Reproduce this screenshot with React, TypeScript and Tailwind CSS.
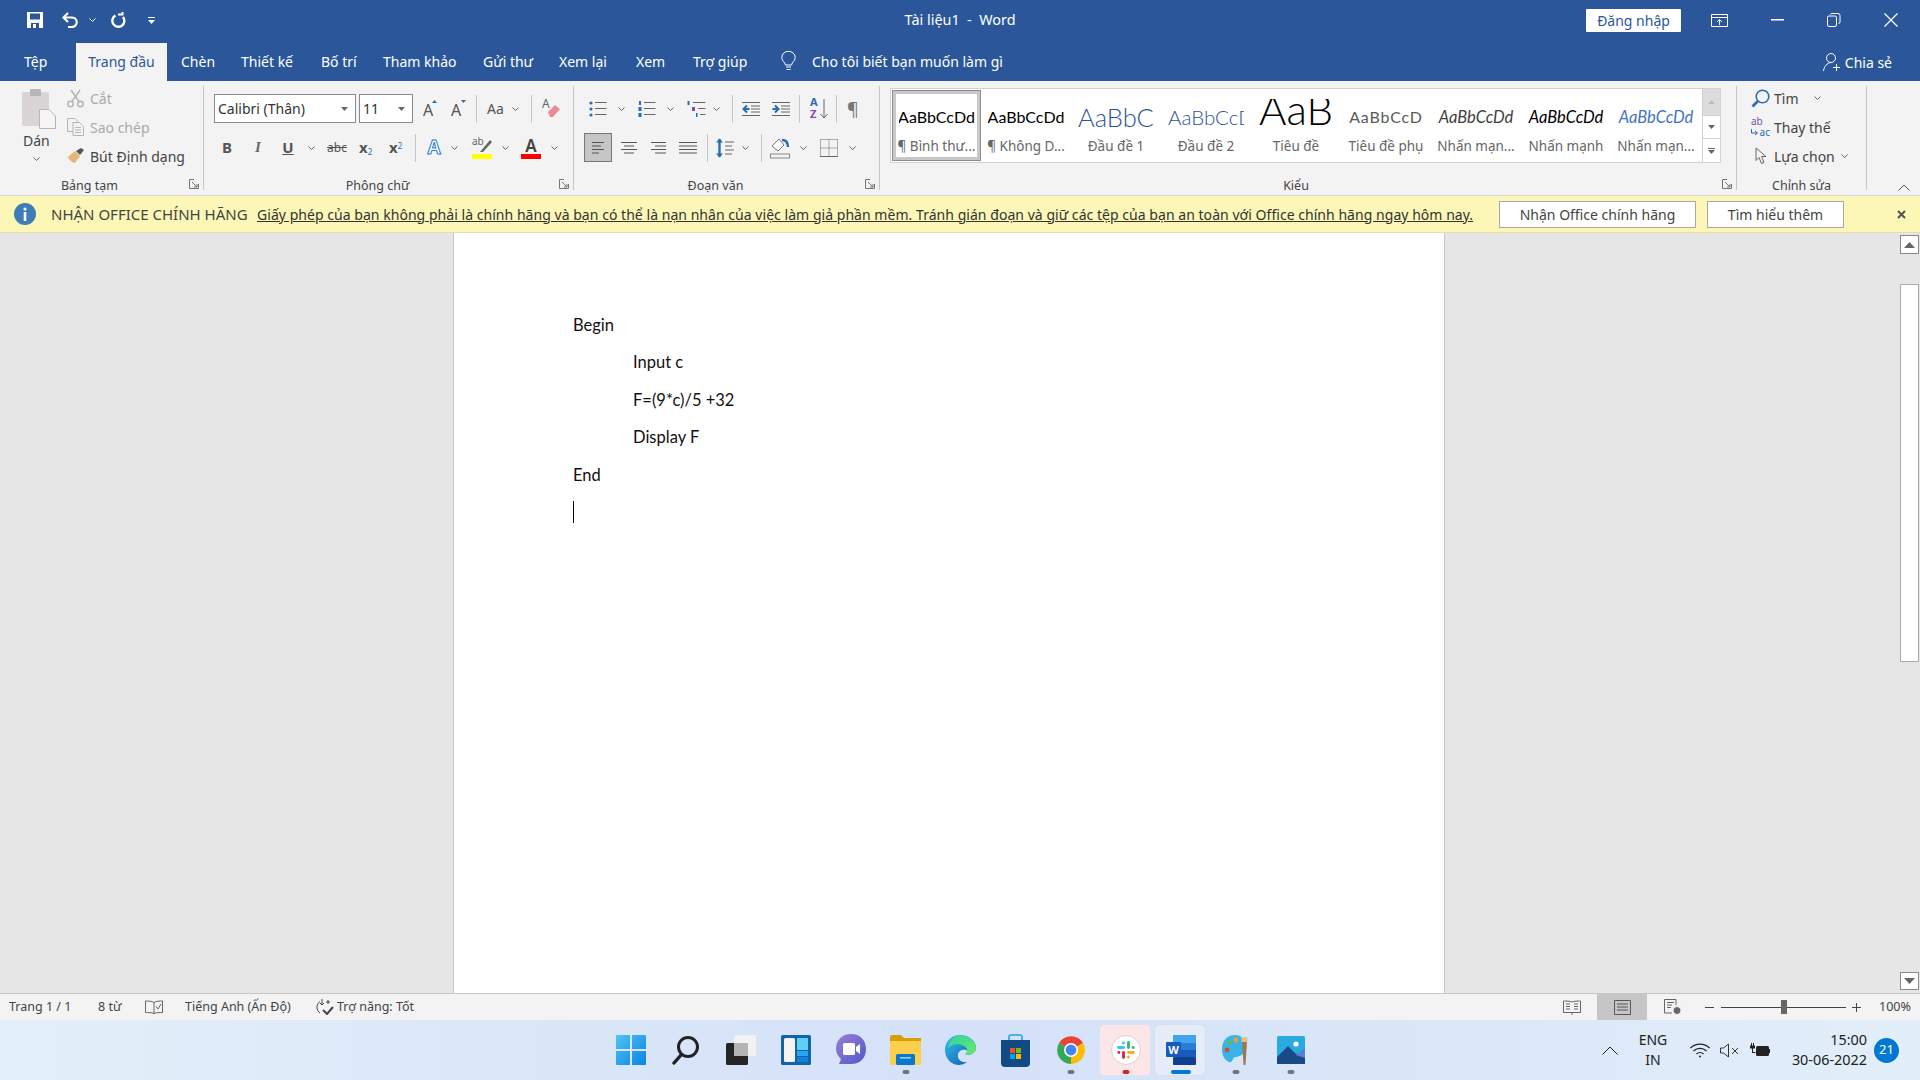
import React from 'react';

const Chev = ({ className = 'ml-0', color = '#666' }: { className?: string; color?: string }) => (
  <svg className={`shrink-0 ${className}`} width="7" height="4" viewBox="0 0 7 4" fill="none">
    <path d="M0.5 0.5 3.5 3.5 6.5 0.5" stroke={color} />
  </svg>
);

const Sep = ({ className }: { className: string }) => <div className={`w-px h-[28px] bg-[#c6c6c6] shrink-0 ${className}`} />;

const Launcher = () => (
  <svg className="absolute right-[4px] top-[3px]" width="10" height="10" viewBox="0 0 10 10" fill="none" stroke="#777">
    <path d="M9.5 5V9.5H0.5V0.5H5" />
    <path d="M3 3 8 8M8 5V8H5" />
  </svg>
);

const Group = ({ label, className, labelClass = '', launcher = true, children }: { label: string; className: string; labelClass?: string; launcher?: boolean; children: React.ReactNode }) => (
  <div className={`my-[5px] flex flex-col border-r border-[#c6c6c6] shrink-0 ${className}`}>
    <div className="flex-1 min-h-0">{children}</div>
    <div className={`relative h-[20px] -mb-[6px] flex items-center justify-center text-[12.5px] text-[#444] ${labelClass}`}>
      <span>{label}</span>
      {launcher && <Launcher />}
    </div>
  </div>
);

const Lines = ({ rows, className = '' }: { rows: [number, number][]; className?: string }) => (
  <svg className={`shrink-0 ${className}`} width="18" height="16" viewBox="0 0 18 16" stroke="#555">
    {rows.map(([x1, x2], i) => (
      <path key={i} d={`M${x1} ${2.5 + i * 3.5}H${x2}`} />
    ))}
  </svg>
);

const ListIcon = ({ kind, className }: { kind: 'b' | 'n' | 'm'; className: string }) => (
  <svg className={`shrink-0 ${className}`} width="20" height="18" viewBox="0 0 20 18" fill="#2b6cb0" stroke="none">
    {kind === 'b' && (
      <>
        <circle cx="2" cy="3" r="1.6" />
        <circle cx="2" cy="9" r="1.6" />
        <circle cx="2" cy="15" r="1.6" />
        <path d="M6 2.5H17.5M6 8.5H17.5M6 14.5H17.5" stroke="#666" />
      </>
    )}
    {kind === 'n' && (
      <>
        <rect x="1" y="1" width="2" height="4" />
        <rect x="0.5" y="7" width="3" height="4" />
        <rect x="0.5" y="13" width="3" height="4" />
        <path d="M6 2.5H17.5M6 8.5H17.5M6 14.5H17.5" stroke="#666" />
      </>
    )}
    {kind === 'm' && (
      <>
        <rect x="0.5" y="1" width="2" height="4" />
        <rect x="5" y="7" width="3" height="4" fill="#7c4dab" />
        <rect x="9" y="13" width="1.5" height="4" />
        <path d="M6 2.5H18.5M11 8.5H18.5M13 14.5H18.5" stroke="#666" />
      </>
    )}
  </svg>
);

const IndentIcon = ({ out, className }: { out?: boolean; className: string }) => (
  <svg className={`shrink-0 ${className}`} width="18" height="16" viewBox="0 0 18 16" fill="none">
    <path d="M0 1.5H18M9 5H18M9 8H18M9 11H18M0 14.5H18" stroke="#666" />
    {out ? <path d="M7.5 8H2M5 4.5 1.5 8 5 11.5" stroke="#2b6cb0" strokeWidth="2" /> : <path d="M0.5 8H6M3 4.5 6.5 8 3 11.5" stroke="#2b6cb0" strokeWidth="2" />}
  </svg>
);

const styles = [
  { sample: 'AaBbCcDd', label: '¶ Bình thư...', cls: 'items-center justify-center text-[16px] text-black' },
  { sample: 'AaBbCcDd', label: '¶ Không D...', cls: 'items-center justify-center text-[16px] text-black' },
  { sample: 'AaBbCc', label: 'Đầu đề 1', cls: 'items-center justify-start text-[25.5px] font-light text-[#2f5496]' },
  { sample: 'AaBbCcD', label: 'Đầu đề 2', cls: 'items-center justify-start text-[20.5px] font-light text-[#2f5496]' },
  { sample: 'AaB', label: 'Tiêu đề', cls: 'items-start justify-center text-[42px] font-light text-black leading-[20px]' },
  { sample: 'AaBbCcD', label: 'Tiêu đề phụ', cls: 'items-center justify-center text-[16px] tracking-[0.8px] text-[#5a5a5a]' },
  { sample: 'AaBbCcDd', label: 'Nhấn mạn...', cls: 'items-center justify-center text-[16.5px] italic text-[#404040]' },
  { sample: 'AaBbCcDd', label: 'Nhấn mạnh', cls: 'items-center justify-center text-[16.5px] italic text-black' },
  { sample: 'AaBbCcDd', label: 'Nhấn mạn...', cls: 'items-center justify-center text-[16.5px] italic text-[#4472c4]' },
];

const StyleBody = ({ s }: { s: (typeof styles)[number] }) => (
  <>
    <div className={`h-[36px] w-[76px] overflow-hidden flex whitespace-nowrap font-['Lato',sans-serif] ${s.cls}`}>{s.sample}</div>
    <div className="mt-[2px] text-[13.5px] leading-[18px] text-[#666] whitespace-nowrap">{s.label}</div>
  </>
);

const TitleBar = () => (
  <div className="h-[43px] grid grid-cols-[1fr_auto_1fr] items-center bg-[#2b579a] text-white">
    <div className="flex items-center pl-[27px] pb-[3px]">
      <svg width="16" height="16" viewBox="0 0 16 16" fill="#fff">
        <path d="M0 0H16V16H0Z" />
        <rect x="3" y="1.5" width="10" height="6" fill="#2b579a" />
        <rect x="4" y="11" width="8" height="5" fill="#2b579a" />
        <rect x="6" y="12" width="3" height="4" fill="#fff" />
      </svg>
      <svg className="ml-[18px]" width="18" height="16" viewBox="0 0 18 16" fill="none" stroke="#fff" strokeWidth="2.2">
        <path d="M3 5.5H11A4.6 4.6 0 0 1 11 15H7" />
        <path d="M7 1 2.5 5.5 7 10" />
      </svg>
      <Chev className="ml-[10px]" color="#fff" />
      <svg className="ml-[14px]" width="16" height="16" viewBox="0 0 16 16" fill="none" stroke="#fff" strokeWidth="2.4">
        <path d="M5.5 3.5A6 6 0 1 0 13 5" />
        <path d="M8 2.5H12.5V0" strokeWidth="2" />
      </svg>
      <svg className="ml-[22px]" width="7" height="7" viewBox="0 0 7 7" fill="#fff">
        <rect y="0" width="7" height="1" />
        <path d="M0 3H7L3.5 7Z" />
      </svg>
    </div>
    <div className="text-[14.4px] whitespace-pre pb-[3px]">Tài liệu1  -  Word</div>
    <div className="flex items-center justify-end pr-[22px] pb-[3px]">
      <div className="w-[95px] h-[23px] bg-white rounded-[1px] flex items-center justify-center text-[14px] text-[#2b579a]">Đăng nhập</div>
      <svg className="ml-[30px]" width="17" height="13" viewBox="0 0 17 13" fill="none" stroke="#fff">
        <path d="M0.5 0.5H16.5V12.5H0.5ZM0.5 3.5H16.5" />
        <path d="M8.5 11V6M6 8 8.5 5.5 11 8" />
      </svg>
      <svg className="ml-[43px]" width="13" height="2" viewBox="0 0 13 2"><rect width="13" height="1.5" fill="#fff" /></svg>
      <svg className="ml-[43px]" width="14" height="14" viewBox="0 0 14 14" fill="none" stroke="#fff">
        <path d="M0.5 4.5Q0.5 3 2 3H8Q9.5 3 9.5 4.5V12Q9.5 13.5 8 13.5H2Q0.5 13.5 0.5 12Z" />
        <path d="M3 1.5Q3.5 0.5 5 0.5H11Q13 0.5 13 2.5V9Q13 10.5 11.5 10.5" />
      </svg>
      <svg className="ml-[43px]" width="14" height="14" viewBox="0 0 14 14" stroke="#fff" strokeWidth="1.2"><path d="M0.5 0.5 13.5 13.5M13.5 0.5 0.5 13.5" /></svg>
    </div>
  </div>
);

const Tabs = () => (
  <div className="h-[38px] flex items-stretch bg-[#2b579a] text-white text-[14px] whitespace-nowrap">
    <div className="w-[76px] pl-[24px] pb-[2px] flex items-center">Tệp</div>
    <div className="w-[91px] bg-[#f3f3f3] text-[#2b579a] pb-[2px] flex items-center justify-center">Trang đầu</div>
    <div className="w-[60px] pl-[14px] pb-[2px] flex items-center">Chèn</div>
    <div className="w-[80px] pl-[14px] pb-[2px] flex items-center">Thiết kế</div>
    <div className="w-[62px] pl-[14px] pb-[2px] flex items-center">Bố trí</div>
    <div className="w-[100px] pl-[14px] pb-[2px] flex items-center">Tham khảo</div>
    <div className="w-[76px] pl-[14px] pb-[2px] flex items-center">Gửi thư</div>
    <div className="w-[77px] pl-[14px] pb-[2px] flex items-center">Xem lại</div>
    <div className="w-[57px] pl-[14px] pb-[2px] flex items-center">Xem</div>
    <div className="w-[88px] pl-[14px] pb-[2px] flex items-center">Trợ giúp</div>
    <div className="ml-[14px] pb-[2px] flex items-center">
      <svg width="15" height="20" viewBox="0 0 15 20" fill="none" stroke="#fff">
        <path d="M4.5 14C4 11 0.8 10 0.8 6.5A6.7 6.2 0 0 1 14.2 6.5C14.2 10 11 11 10.5 14Z" />
        <path d="M5 16H10M5.5 18.5H9.5" />
      </svg>
    </div>
    <div className="ml-[16px] pb-[2px] flex items-center">Cho tôi biết bạn muốn làm gì</div>
    <div className="ml-auto pr-[28px] flex items-center">
      <svg width="18" height="20" viewBox="0 0 18 20" fill="none" stroke="#fff">
        <circle cx="8" cy="6" r="4.5" />
        <path d="M0.5 19C1 14.5 4 11 8 10.5M13.5 12V19M10 15.5H17" />
      </svg>
      <span className="ml-[4px]">Chia sẻ</span>
    </div>
  </div>
);

const Clipboard = () => (
  <Group label="Bảng tạm" className="w-[204px]" labelClass="pr-[24px]">
    <div className="flex">
      <div className="w-[67px] flex flex-col items-start pl-[22px]">
        <svg className="mt-[3px]" width="34" height="40" viewBox="0 0 34 40">
          <rect x="0" y="3" width="27" height="34" rx="1.5" fill="#d9d5d7" />
          <rect x="8" y="0" width="11" height="7" rx="1" fill="#b9b5b7" />
          <path d="M17.5 20.5H27L33.5 27V39.5H17.5Z" fill="#f6f4f6" stroke="#b9b5b7" />
        </svg>
        <div className="mt-[2px] ml-[1px] text-[14px] leading-[20px] text-[#444]">Dán</div>
        <Chev className="mt-[6px] ml-[11px]" />
      </div>
      <div className="flex flex-col gap-[3px] -mt-[1px] text-[14px]">
        <div className="h-[26px] flex items-center text-[#aaa]">
          <svg width="17" height="19" viewBox="0 0 17 19" fill="none" stroke="#b5b5b5" strokeWidth="1.5">
            <circle cx="3.5" cy="15" r="2.7" />
            <circle cx="13.5" cy="15" r="2.7" />
            <path d="M5 12.5 13 1M12 12.5 4 1" />
          </svg>
          <span className="ml-[6px]">Cắt</span>
        </div>
        <div className="h-[26px] flex items-center text-[#aaa]">
          <svg width="17" height="18" viewBox="0 0 17 18" fill="#f3f3f3" stroke="#b5b5b5">
            <path d="M0.5 0.5H8L11 3.5V13.5H0.5Z" />
            <path d="M6 4.5H12.5L16.5 8.5V17.5H6Z" />
            <path d="M8 9.5H14M8 12H14M8 14.5H14" />
          </svg>
          <span className="ml-[6px]">Sao chép</span>
        </div>
        <div className="h-[26px] flex items-center text-[#444]">
          <svg width="18" height="18" viewBox="0 0 18 18">
            <path d="M1 10 8 4 13 9 8 16C6 16 2 13 1 10Z" fill="#e3b778" />
            <path d="M9 4 14 1 17 3 13 8Z" fill="#555" />
          </svg>
          <span className="ml-[5px]">Bút Định dạng</span>
        </div>
      </div>
    </div>
  </Group>
);

const FontGroup = () => (
  <Group label="Phông chữ" className="w-[370px]" labelClass="pr-[22px]">
    <div className="mt-[8px] pl-[10px] flex items-center h-[29px] text-[#555]">
      <div className="w-[142px] h-[29px] border border-[#8a8a8a] bg-white flex items-center pl-[3px] pr-[7px] justify-between">
        <span className="text-[14px] text-[#333]">Calibri (Thân)</span>
        <svg width="7" height="4" viewBox="0 0 7 4"><path d="M0 0H7L3.5 4Z" fill="#666" /></svg>
      </div>
      <div className="ml-[3px] w-[54px] h-[29px] border border-[#8a8a8a] bg-white flex items-center pl-[3px] pr-[7px] justify-between">
        <span className="text-[14px] text-[#333]">11</span>
        <svg width="7" height="4" viewBox="0 0 7 4"><path d="M0 0H7L3.5 4Z" fill="#666" /></svg>
      </div>
      <div className="ml-[10px] w-[14px] h-[18px] relative text-[16px] leading-[20px]">A<svg className="absolute right-0 top-0" width="5" height="3"><path d="M0 3 2.5 0 5 3Z" fill="#2b6cb0" /></svg></div>
      <div className="ml-[14px] w-[15px] h-[18px] relative text-[16px] leading-[20px]">A<svg className="absolute right-0 top-0" width="5" height="3"><path d="M0 0 2.5 3 5 0Z" fill="#2b6cb0" /></svg></div>
      <Sep className="ml-[10px]" />
      <span className="ml-[10px] w-[17px] text-[14px] whitespace-nowrap">Aa</span>
      <Chev className="ml-[8px]" />
      <Sep className="ml-[12px]" />
      <div className="ml-[10px] relative w-[19px] h-[22px]">
        <span className="absolute left-0 -top-[3px] text-[12px] text-[#666]">A</span>
        <svg className="absolute left-0 top-0" width="19" height="22" viewBox="0 0 19 22"><path d="M6 14 13 7 18 11 11 19H8Z" fill="#ea8a96" /></svg>
      </div>
    </div>
    <div className="mt-[10px] pl-[14px] flex items-center h-[29px] text-[#555]">
      <span className="w-[18px] text-center text-[15px] font-bold">B</span>
      <span className="ml-[13px] w-[18px] text-center text-[15px] font-bold italic font-['Liberation_Serif',serif] text-[#666]">I</span>
      <span className="ml-[12px] w-[18px] text-center text-[15px] font-bold underline">U</span>
      <Chev className="ml-[11px]" />
      <span className="ml-[10px] w-[24px] text-center text-[12px] leading-none line-through">abc</span>
      <span className="ml-[10px] w-[16px] text-[15px] font-bold whitespace-nowrap">x<sub className="text-[8px] text-[#2b6cb0] font-normal">2</sub></span>
      <span className="ml-[14px] w-[16px] text-[15px] font-bold whitespace-nowrap">x<sup className="text-[8px] text-[#2b6cb0] font-normal">2</sup></span>
      <Sep className="ml-[10px]" />
      <span className="ml-[10px] w-[16px] text-center text-[19px] leading-none text-[#fff] [-webkit-text-stroke:1px_#2b7cd3] font-bold">A</span>
      <Chev className="ml-[9px]" />
      <div className="ml-[14px] w-[20px] h-[22px] flex flex-col">
        <div className="h-[16px] relative">
          <span className="absolute left-0 -top-[3px] text-[10px] text-[#666]">ab</span>
          <svg className="absolute left-0 top-0" width="20" height="16" viewBox="0 0 20 16"><path d="M8 15 18 3 20 5 11 15Z" fill="#666" /></svg>
        </div>
        <div className="mt-[1px] h-[5px] bg-[#ffff00]" />
      </div>
      <Chev className="ml-[10px]" />
      <div className="ml-[12px] w-[20px] h-[22px] flex flex-col items-center">
        <span className="h-[16px] text-[17px] leading-[17px] font-semibold text-[#444]">A</span>
        <div className="mt-[1px] w-[20px] h-[5px] bg-[#ff0000]" />
      </div>
      <Chev className="ml-[10px]" />
    </div>
  </Group>
);

const Paragraph = () => (
  <Group label="Đoạn văn" className="w-[306px]" labelClass="pr-[22px]">
    <div className="mt-[8px] flex items-center h-[29px] text-[#555]">
      <ListIcon kind="b" className="ml-[15px]" />
      <Chev className="ml-[9px]" />
      <ListIcon kind="n" className="ml-[13px]" />
      <Chev className="ml-[9px]" />
      <ListIcon kind="m" className="ml-[13px]" />
      <Chev className="ml-[6px]" />
      <Sep className="ml-[12px]" />
      <IndentIcon out className="ml-[9px]" />
      <IndentIcon className="ml-[12px]" />
      <Sep className="ml-[9px]" />
      <div className="ml-[10px] w-[18px] h-[24px] relative">
        <span className="absolute left-0 -top-[1px] text-[11px] leading-[12px] font-bold text-[#2b6cb0]">A</span>
        <span className="absolute left-0 top-[11px] text-[11px] leading-[12px] font-bold text-[#7c4dab]">Z</span>
        <svg className="absolute right-0 top-[2px]" width="8" height="20" viewBox="0 0 8 20" fill="none" stroke="#666"><path d="M4 0V19M0.5 15 4 19 7.5 15" /></svg>
      </div>
      <Sep className="ml-[8px]" />
      <span className="ml-[10px] w-[14px] text-[18px] leading-none text-[#777]">¶</span>
    </div>
    <div className="mt-[10px] flex items-center h-[29px]">
      <div className="ml-[10px] w-[28px] h-[29px] bg-[#c6c6c6] border border-[#777] flex items-center justify-center shrink-0">
        <Lines rows={[[3, 15], [3, 12], [3, 15], [3, 10]]} />
      </div>
      <Lines className="ml-[8px]" rows={[[1, 17], [4, 14], [1, 17], [4, 14]]} />
      <Lines className="ml-[11px]" rows={[[2, 17], [6, 17], [2, 17], [6, 17]]} />
      <Lines className="ml-[12px]" rows={[[0, 18], [0, 18], [0, 18], [0, 18]]} />
      <Sep className="ml-[10px]" />
      <svg className="ml-[8px] shrink-0" width="18" height="20" viewBox="0 0 18 20" fill="none">
        <path d="M3.5 1V19" stroke="#2b6cb0" strokeWidth="2.4" />
        <path d="M0 4.5 3.5 0.5 7 4.5ZM0 15.5 3.5 19.5 7 15.5Z" fill="#2b6cb0" />
        <path d="M9 4H18M9 8H16M9 12H18M9 16H16" stroke="#666" />
      </svg>
      <Chev className="ml-[8px]" />
      <Sep className="ml-[12px]" />
      <svg className="ml-[8px] shrink-0" width="20" height="22" viewBox="0 0 20 22" fill="none">
        <path d="M9 2 2 9 8 14 14 8Z" stroke="#777" fill="#fff" />
        <path d="M12 3C16 3 18 6 18 10" stroke="#2b6cb0" strokeWidth="2.4" />
        <rect x="0.5" y="17" width="19" height="4" stroke="#888" fill="#f3f3f3" />
      </svg>
      <Chev className="ml-[10px]" />
      <svg className="ml-[13px] shrink-0" width="18" height="18" viewBox="0 0 18 18" fill="none" stroke="#666">
        <path d="M0.5 0.5H17.5M0.5 0.5V17.5M17.5 0.5V17.5M9 0.5V17.5M0.5 9H17.5" strokeDasharray="1 1" />
        <path d="M0 17.5H18" />
      </svg>
      <Chev className="ml-[11px]" />
    </div>
  </Group>
);

const StylesGroup = () => (
  <Group label="Kiểu" className="w-[857px]" labelClass="pr-[24px]">
    <div className="mt-[2px] ml-[10px] w-[831px] h-[75px] flex bg-white border border-[#d2d2d2]">
      <div className="flex items-center pl-[1px]">
        <div className="w-[89px] h-[71px] border border-[#8e8e8e] bg-[#c8c8c8] p-[3px]">
          <div className="w-full h-full bg-white flex flex-col items-center pt-[5px] overflow-hidden">
            <StyleBody s={styles[0]} />
          </div>
        </div>
        {styles.slice(1).map((s, i) => (
          <div key={i} className="w-[90px] h-[71px] flex flex-col items-center pt-[9px] overflow-hidden">
            <StyleBody s={s} />
          </div>
        ))}
      </div>
      <div className="ml-auto w-[18px] flex flex-col border-l border-[#d2d2d2] shrink-0">
        <div className="h-[26px] bg-[#dcdcdc] flex items-center justify-center"><svg width="7" height="4"><path d="M0 4 3.5 0 7 4Z" fill="#bdbdbd" /></svg></div>
        <div className="h-[24px] bg-white border-y border-[#d2d2d2] flex items-center justify-center"><svg width="7" height="4"><path d="M0 0 3.5 4 7 0Z" fill="#666" /></svg></div>
        <div className="flex-1 bg-white flex flex-col items-center justify-center gap-[1px]">
          <div className="w-[7px] h-px bg-[#666]" />
          <svg width="7" height="4"><path d="M0 0 3.5 4 7 0Z" fill="#666" /></svg>
        </div>
      </div>
    </div>
  </Group>
);

const Editing = () => (
  <Group label="Chỉnh sửa" className="w-[130px]" launcher={false}>
    <div className="flex flex-col gap-[3px] -mt-[1px] text-[14px] text-[#444]">
      <div className="h-[26px] flex items-center pl-[14px]">
        <svg width="19" height="19" viewBox="0 0 19 19" fill="none" stroke="#2b6cb0">
          <circle cx="11.5" cy="7.5" r="6.3" strokeWidth="1.6" />
          <path d="M7 12 1.5 17.5" strokeWidth="2.6" />
        </svg>
        <span className="ml-[4px]">Tìm</span>
        <Chev className="ml-[15px]" />
      </div>
      <div className="h-[26px] flex items-center pl-[14px]">
        <div className="w-[19px] h-[24px] relative text-[10px] leading-[10px] shrink-0">
          <span className="absolute left-0 top-[1px] text-[#7c4dab]">ab</span>
          <span className="absolute right-0 bottom-[2px] text-[#2b6cb0]">ac</span>
          <svg className="absolute left-0 bottom-[3px]" width="7" height="7" viewBox="0 0 7 7" fill="none" stroke="#2b6cb0"><path d="M0.5 0V4H6M4 2 6.5 4 4 6" /></svg>
        </div>
        <span className="ml-[4px]">Thay thế</span>
      </div>
      <div className="h-[26px] flex items-center pl-[18px]">
        <svg width="12" height="18" viewBox="0 0 12 18" fill="#f3f3f3" stroke="#666"><path d="M1 1V13.5L4 10.5 6.5 16.5 9 15.5 6.5 9.5H11Z" /></svg>
        <span className="ml-[7px]">Lựa chọn</span>
        <Chev className="ml-[6px]" />
      </div>
    </div>
  </Group>
);

const Ribbon = () => (
  <div className="h-[114px] bg-[#f3f3f3] flex">
    <Clipboard />
    <FontGroup />
    <Paragraph />
    <StylesGroup />
    <Editing />
    <div className="flex-1 flex items-end justify-center pb-[4px] pl-[20px]">
      <svg width="12" height="7" viewBox="0 0 12 7" fill="none" stroke="#555"><path d="M0.5 6.5 6 1 11.5 6.5" /></svg>
    </div>
  </div>
);

const LicenseBar = () => (
  <div className="h-[38px] flex items-center bg-[#fcf7b6] border-t border-[#d8d8d8] border-b border-b-[#e6e29c] text-[14px] text-[#444] whitespace-nowrap">
    <svg className="ml-[14px] shrink-0" width="22" height="22" viewBox="0 0 22 22">
      <circle cx="11" cy="11" r="11" fill="#3f7cb8" />
      <rect x="9.7" y="9" width="2.6" height="9" fill="#fff" />
      <circle cx="11" cy="6" r="1.6" fill="#fff" />
    </svg>
    <span className="ml-[15px] w-[206px] text-[15px]">NHẬN OFFICE CHÍNH HÃNG</span>
    <span className="underline text-[#333] tracking-[0.04px]">Giấy phép của bạn không phải là chính hãng và bạn có thể là nạn nhân của việc làm giả phần mềm. Tránh gián đoạn và giữ các tệp của bạn an toàn với Office chính hãng ngay hôm nay.</span>
    <div className="ml-auto w-[197px] h-[27px] bg-white border border-[#a8a8a8] flex items-center justify-center">Nhận Office chính hãng</div>
    <div className="ml-[11px] w-[137px] h-[27px] bg-white border border-[#a8a8a8] flex items-center justify-center">Tìm hiểu thêm</div>
    <svg className="ml-[53px] mr-[14px] shrink-0" width="9" height="9" viewBox="0 0 9 9" stroke="#555" strokeWidth="2"><path d="M1 1 8 8M8 1 1 8" /></svg>
  </div>
);

const Document = () => (
  <div className="flex-1 min-h-0 flex bg-[#e6e6e6]">
    <div className="ml-[453px] w-[992px] bg-white border-x border-[#c6c6c6] pl-[119px] pt-[74px] font-['Lato',sans-serif] text-[16.5px] leading-[37.4px] text-[#111]">
      <div className="h-[37.4px]">Begin</div>
      <div className="h-[37.4px] pl-[60px]">Input c</div>
      <div className="h-[37.4px] pl-[60px]">F=(9*c)/5 +32</div>
      <div className="h-[37.4px] pl-[60px]">Display F</div>
      <div className="h-[37.4px]">End</div>
      <div className="mt-[7px] w-px h-[22px] bg-black" />
    </div>
    <div className="ml-auto mr-[1px] w-[19px] flex flex-col pt-[2px] pb-[3px]">
      <div className="h-[19px] bg-white border border-[#8a8a8a] flex items-center justify-center"><svg width="11" height="6"><path d="M0 6 5.5 0 11 6Z" fill="#666" /></svg></div>
      <div className="mt-[30px] h-[378px] bg-white border border-[#ababab]" />
      <div className="mt-auto h-[18px] bg-white border border-[#8a8a8a] flex items-center justify-center"><svg width="11" height="6"><path d="M0 0 5.5 6 11 0Z" fill="#666" /></svg></div>
    </div>
  </div>
);

const StatusBar = () => (
  <div className="h-[27px] bg-[#f3f3f3] border-t border-[#c6c6c6] flex items-center text-[12.5px] text-[#444] whitespace-nowrap">
    <span className="ml-[9px] w-[89px] pt-[1px]">Trang 1 / 1</span>
    <span className="w-[47px] pt-[1px]">8 từ</span>
    <svg width="18" height="15" viewBox="0 0 18 15" fill="none" stroke="#666">
      <path d="M9 2.5C7 1 3 1 0.5 1V12.5C3 12.5 7 12.5 9 13.5C11 12.5 15 12.5 17.5 12.5V1C15 1 11 1 9 2.5V14" />
      <path d="M11 6.5 13 9 16 4" />
    </svg>
    <span className="ml-[22px] w-[130px] pt-[1px]">Tiếng Anh (Ấn Độ)</span>
    <svg width="19" height="16" viewBox="0 0 19 16" fill="none" stroke="#444">
      <path d="M5 2.5A7 7 0 0 0 5 14M7 0V6M5 4 7 6 9 4M11 3H15M13 1V5" />
      <path d="M8 11 12 15 18 8" strokeWidth="2" />
    </svg>
    <span className="ml-[3px] pt-[1px]">Trợ năng: Tốt</span>
    <div className="ml-auto flex items-center h-full">
      <svg width="18" height="15" viewBox="0 0 18 15" fill="none" stroke="#666">
        <path d="M9 2C7 1 3 1 0.5 1V12.5H9M9 2C11 1 15 1 17.5 1V12.5H9V15M3 4H7M3 6.5H7M3 9H7M11 4H15M11 6.5H15M11 9H15" />
      </svg>
      <div className="ml-[16px] w-[50px] h-full bg-[#c6c6c6] flex items-center justify-center">
        <svg width="17" height="15" viewBox="0 0 17 15" fill="none" stroke="#555">
          <path d="M0.5 0.5H16.5V14.5H0.5ZM3 4H14M3 7H14M3 10H14" />
        </svg>
      </div>
      <svg className="ml-[17px]" width="18" height="16" viewBox="0 0 18 16" fill="none" stroke="#666">
        <path d="M8 14H0.5V0.5H12V6M3 3.5H10M3 6H8M3 8.5H7" />
        <circle cx="13" cy="11.5" r="4" fill="#666" stroke="#f3f3f3" />
      </svg>
      <div className="ml-[23px] w-[9px] h-px bg-[#444]" />
      <div className="ml-[7px] w-[125px] h-px bg-[#444] flex items-center pl-[60px]">
        <div className="w-[6px] h-[14px] bg-[#666] shrink-0" />
      </div>
      <svg className="ml-[6px]" width="9" height="9" viewBox="0 0 9 9" stroke="#444"><path d="M0 4.5H9M4.5 0V9" /></svg>
      <span className="ml-[18px] mr-[11px] w-[30px] pt-[1px]">100%</span>
    </div>
  </div>
);

const AppCell = ({ bg = '', dot = '', children }: { bg?: string; dot?: string; children: React.ReactNode }) => (
  <div className={`relative w-[55px] h-[50px] flex items-center justify-center shrink-0`}>
    {bg && <div className={`absolute inset-y-0 left-[2px] right-[3px] rounded-[4px] ${bg}`} />}
    <div className="relative flex items-center justify-center">{children}</div>
    {dot && <div className={`absolute left-1/2 -translate-x-1/2 bottom-[1px] h-[4px] rounded-full ${dot}`} />}
  </div>
);

const Taskbar = () => (
  <div className="h-[60px] flex items-center bg-linear-to-r from-[#e3eff9] via-[#d4e1f8] to-[#e2eef9] pl-[603px] text-[14px] text-[#222] whitespace-nowrap">
    <AppCell>
      <svg width="30" height="30" viewBox="0 0 30 30">
        <defs><linearGradient id="win" x1="0" y1="0" x2="1" y2="1"><stop offset="0" stopColor="#4fc3f7" /><stop offset="1" stopColor="#0a84e0" /></linearGradient></defs>
        <path d="M0 1Q0 0 1 0H14V14H0ZM16 0H29Q30 0 30 1V14H16ZM0 16H14V30H1Q0 30 0 29ZM16 16H30V29Q30 30 29 30H16Z" fill="url(#win)" />
      </svg>
    </AppCell>
    <AppCell>
      <svg width="28" height="30" viewBox="0 0 28 30" fill="none" stroke="#222">
        <circle cx="16" cy="12" r="9.5" strokeWidth="3" />
        <path d="M9 20 2 28" strokeWidth="3.4" strokeLinecap="round" />
      </svg>
    </AppCell>
    <AppCell>
      <svg width="30" height="30" viewBox="0 0 30 30">
        <rect x="0" y="8" width="22" height="22" rx="1.5" fill="#252525" />
        <rect x="8" y="0" width="22" height="21" rx="1.5" fill="#f2f2f2" />
        <rect x="8" y="8" width="14" height="13" fill="#b4b4b4" />
      </svg>
    </AppCell>
    <AppCell>
      <svg width="30" height="30" viewBox="0 0 30 30">
        <rect width="30" height="30" rx="1.5" fill="#1464a5" />
        <rect x="3" y="3" width="11" height="24" rx="1.5" fill="#f3f3f3" />
        <rect x="16" y="3" width="11" height="12" fill="#5fd0f5" />
        <rect x="16" y="16" width="11" height="5" fill="#2aa5ef" />
        <rect x="16" y="22" width="11" height="5" fill="#0a84e0" />
      </svg>
    </AppCell>
    <AppCell>
      <svg width="30" height="32" viewBox="0 0 30 32">
        <defs><linearGradient id="chat" x1="0" y1="0" x2="1" y2="1"><stop offset="0" stopColor="#9a7fd6" /><stop offset="1" stopColor="#5059c9" /></linearGradient></defs>
        <path d="M15 0C24 0 30 6 30 15C30 24 24 30 15 30H3L5 25C2 22 0 19 0 15C0 6 6 0 15 0Z" fill="url(#chat)" />
        <rect x="7" y="9" width="12" height="12" rx="1.5" fill="#fff" />
        <path d="M20 13 24 10V20L20 17Z" fill="#fff" />
      </svg>
    </AppCell>
    <AppCell dot="w-[7px] bg-[#70757f]">
      <svg width="31" height="30" viewBox="0 0 31 30">
        <path d="M0 2Q0 0 2 0H11L14 3H31V8H0Z" fill="#d99e06" />
        <rect y="6" width="31" height="24" rx="1" fill="#fccf4d" />
        <rect x="6" y="19" width="19" height="11" rx="1.5" fill="#0a78c8" />
        <rect x="10" y="22" width="11" height="1.6" fill="#8cd0f5" />
      </svg>
    </AppCell>
    <AppCell>
      <svg width="31" height="30" viewBox="0 0 31 30">
        <defs>
          <linearGradient id="edge1" x1="0" y1="0" x2="1" y2="1"><stop offset="0" stopColor="#35c1f1" /><stop offset="1" stopColor="#0c59a4" /></linearGradient>
          <linearGradient id="edge2" x1="0" y1="0" x2="1" y2="1"><stop offset="0" stopColor="#2fd3a0" /><stop offset="1" stopColor="#66eb6e" /></linearGradient>
        </defs>
        <path d="M15 0C7 0 0 6 0 15C0 24 7 30 14 30C16 30 20 29 22 27C16 28 12 24 13 19C14 15 18 14 21 15C23 16 22 19 20 19C25 21 31 18 31 13C31 6 24 0 15 0Z" fill="url(#edge1)" />
        <path d="M15 0C22 0 31 5 31 13C31 18 25 21 20 19C23 17 23 13 19 11C14 8 7 9 3 13C4 6 9 0 15 0Z" fill="url(#edge2)" />
      </svg>
    </AppCell>
    <AppCell>
      <svg width="29" height="33" viewBox="0 0 29 33">
        <path d="M8 8V3Q8 1 10 1H19Q21 1 21 3V8" fill="none" stroke="#25a5e8" strokeWidth="1.6" />
        <path d="M0 6H29V29Q29 33 25 33H4Q0 33 0 29Z" fill="#114a85" />
        <rect x="9" y="14" width="5" height="5" fill="#f25022" />
        <rect x="15" y="14" width="5" height="5" fill="#7fba00" />
        <rect x="9" y="20" width="5" height="5" fill="#00a4ef" />
        <rect x="15" y="20" width="5" height="5" fill="#ffb900" />
      </svg>
    </AppCell>
    <AppCell dot="w-[7px] bg-[#70757f]">
      <svg width="28" height="28" viewBox="0 0 28 28">
        <path d="M14 14 2 7A14 14 0 0 1 26.1 7Z" fill="#ea4335" />
        <path d="M14 14 26.1 7A14 14 0 0 1 14 28Z" fill="#fbbc04" />
        <path d="M14 14 14 28A14 14 0 0 1 2 7Z" fill="#34a853" />
        <circle cx="14" cy="14" r="7" fill="#fff" />
        <circle cx="14" cy="14" r="5.4" fill="#4285f4" />
      </svg>
    </AppCell>
    <AppCell bg="bg-[#fde6e7]" dot="w-[7px] bg-[#c42b2b]">
      <svg width="30" height="30" viewBox="0 0 30 30">
        <circle cx="15" cy="15" r="14.5" fill="#fff" stroke="#d8d0d0" />
        <g strokeWidth="2.8" strokeLinecap="round" fill="none">
          <path d="M7.5 12.5H12.5M12.5 8V7.8" stroke="#36c5f0" />
          <path d="M17.5 7.5V12.5M22 12.5H22.2" stroke="#2eb67d" />
          <path d="M17.5 17.5H22.5M17.5 22V22.2" stroke="#ecb22e" />
          <path d="M12.5 17.5V22.5M8 17.5H7.8" stroke="#e01e5a" />
        </g>
      </svg>
    </AppCell>
    <AppCell bg="bg-[#e6edf9] shadow-[0_0_1px_#bbb]" dot="w-[20px] bg-[#0078d4]">
      <svg width="30" height="30" viewBox="0 0 30 30">
        <rect x="7" y="0" width="23" height="8" fill="#41a5ee" />
        <rect x="7" y="8" width="23" height="7" fill="#2b7cd3" />
        <rect x="7" y="15" width="23" height="7" fill="#185abd" />
        <rect x="7" y="22" width="23" height="8" rx="1" fill="#103f91" />
        <rect x="0" y="7" width="15" height="15" rx="1" fill="#185abd" />
        <text x="7.5" y="19" textAnchor="middle" fontFamily="'Noto Sans',sans-serif" fontWeight="700" fontSize="11" fill="#fff">W</text>
      </svg>
    </AppCell>
    <AppCell dot="w-[7px] bg-[#70757f]">
      <svg width="28" height="30" viewBox="0 0 28 30">
        <path d="M13 0C5 0 0 6 0 14C0 20 2 25 7 27C11 28 10 23 13 22C17 22 21 20 24 15C26 7 21 0 13 0Z" fill="#3ab4e8" />
        <circle cx="8" cy="8" r="2.4" fill="#5cb85c" />
        <circle cx="14" cy="5" r="2.4" fill="#f0a030" />
        <circle cx="5" cy="15" r="2.4" fill="#d9483b" />
        <path d="M20 6 25 6 23.5 30H21.5Z" fill="#a0784f" />
        <rect x="19.5" y="2" width="6" height="5" fill="#e2c48a" />
      </svg>
    </AppCell>
    <AppCell dot="w-[7px] bg-[#70757f]">
      <svg width="28" height="28" viewBox="0 0 28 28">
        <rect width="28" height="28" rx="1.5" fill="#29abe2" />
        <circle cx="19" cy="8" r="2.6" fill="#fff" />
        <path d="M0 28V21L11 10 21 20 28 16V28Z" fill="#1a4a86" />
        <path d="M19 19 28 12V22Z" fill="#5b7fd0" />
      </svg>
    </AppCell>
    <div className="ml-auto flex items-center">
      <svg width="16" height="9" viewBox="0 0 16 9" fill="none" stroke="#222"><path d="M0.5 8.5 8 1 15.5 8.5" /></svg>
      <div className="ml-[20px] w-[30px] flex flex-col items-center leading-[20px]">
        <span>ENG</span>
        <span>IN</span>
      </div>
      <svg className="ml-[22px]" width="20" height="15" viewBox="0 0 20 15" fill="none" stroke="#222" strokeWidth="1.3">
        <path d="M0.5 5A13.5 13.5 0 0 1 19.5 5M3.5 8A9.5 9.5 0 0 1 16.5 8M6.5 11A5 5 0 0 1 13.5 11" />
        <circle cx="10" cy="13.5" r="1" fill="#222" stroke="none" />
      </svg>
      <svg className="ml-[10px]" width="19" height="15" viewBox="0 0 19 15" fill="none" stroke="#333">
        <path d="M0.5 5V10H3.5L8.5 14V1L3.5 5ZM12 5 18 11M18 5 12 11" />
      </svg>
      <svg className="ml-[11px]" width="20" height="15" viewBox="0 0 20 15">
        <rect x="6" y="3" width="13" height="10" rx="1.5" fill="#222" />
        <rect x="19" y="6" width="1" height="4" fill="#222" />
        <path d="M1 0H2V2.5H3V0H4V2.5H5V5.5H3V9H5.5V10H2V5.5H0V2.5H1Z" fill="#222" />
      </svg>
      <div className="ml-[17px] w-[80px] flex flex-col items-end leading-[20px] text-[14.4px]">
        <span>15:00</span>
        <span>30-06-2022</span>
      </div>
      <div className="ml-[7px] mr-[21px] w-[25px] h-[25px] rounded-full bg-[#0078d4] text-white text-[13px] flex items-center justify-center">21</div>
    </div>
  </div>
);

export default function App() {
  return (
    <div className="w-[1920px] h-[1080px] overflow-hidden flex flex-col font-['Noto_Sans',sans-serif]">
      <TitleBar />
      <Tabs />
      <Ribbon />
      <LicenseBar />
      <Document />
      <StatusBar />
      <Taskbar />
    </div>
  );
}
